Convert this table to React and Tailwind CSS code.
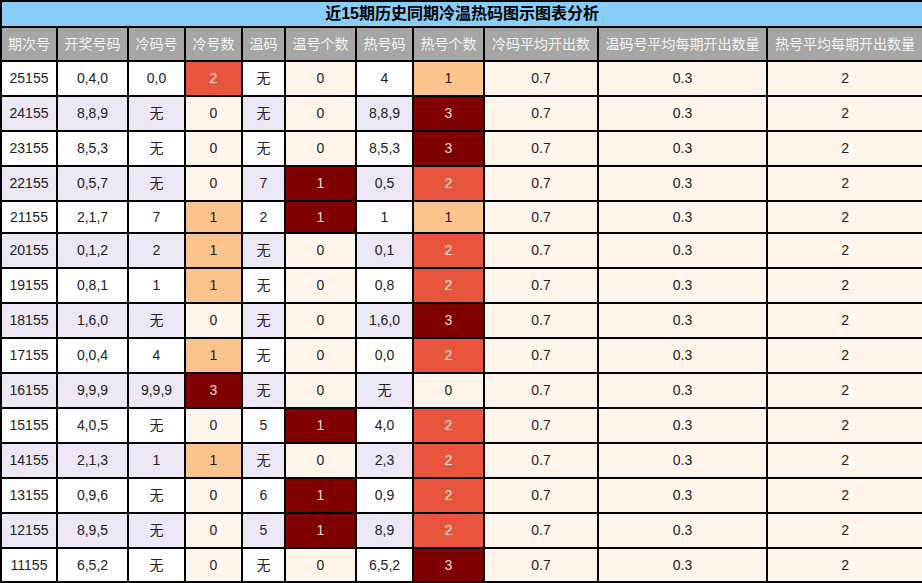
const headers = [
  "期次号",
  "开奖号码",
  "冷码号",
  "冷号数",
  "温码",
  "温号个数",
  "热号码",
  "热号个数",
  "冷码平均开出数",
  "温码号平均每期开出数量",
  "热号平均每期开出数量",
];

const widths = [56, 71, 57, 57, 43, 71, 57, 71, 114, 169, 156];

// 期次号, 开奖号码, 冷码号, 冷号数, 温码, 温号个数, 热号码, 热号个数
const rows = [
  ["25155", "0,4,0", "0,0", 2, "无", 0, "4", 1],
  ["24155", "8,8,9", "无", 0, "无", 0, "8,8,9", 3],
  ["23155", "8,5,3", "无", 0, "无", 0, "8,5,3", 3],
  ["22155", "0,5,7", "无", 0, "7", 1, "0,5", 2],
  ["21155", "2,1,7", "7", 1, "2", 1, "1", 1],
  ["20155", "0,1,2", "2", 1, "无", 0, "0,1", 2],
  ["19155", "0,8,1", "1", 1, "无", 0, "0,8", 2],
  ["18155", "1,6,0", "无", 0, "无", 0, "1,6,0", 3],
  ["17155", "0,0,4", "4", 1, "无", 0, "0,0", 2],
  ["16155", "9,9,9", "9,9,9", 3, "无", 0, "无", 0],
  ["15155", "4,0,5", "无", 0, "5", 1, "4,0", 2],
  ["14155", "2,1,3", "1", 1, "无", 0, "2,3", 2],
  ["13155", "0,9,6", "无", 0, "6", 1, "0,9", 2],
  ["12155", "8,9,5", "无", 0, "5", 1, "8,9", 2],
  ["11155", "6,5,2", "无", 0, "无", 0, "6,5,2", 3],
];

const cream = "bg-[#fff5ea] text-[#222]";
const light = "bg-[#fbc48d] text-[#222]";
const red = "bg-[#e9553c] text-[#fbe9e6]";
const dark = "bg-[#800000] text-[#f1dada]";

// cold / hot counts go 0..3, warm count only 0..1
const scale = { 0: cream, 1: light, 2: red, 3: dark };
const warmScale = { 0: cream, 1: dark };

const cell = "border-2 border-black text-center p-0";

export default function App() {
  return (
    <div className="w-[922px] h-[583px] overflow-hidden bg-white font-['Liberation_Sans','Noto_Sans_CJK_SC',sans-serif] text-[14px] text-[#222]">
      <table className="w-[922px] table-fixed border-collapse">
        <colgroup>
          {widths.map((w, i) => (
            <col key={i} style={{ width: w }} />
          ))}
        </colgroup>
        <thead>
          <tr className="h-[26px]">
            <th colSpan={11} className={`${cell} bg-[#87cefa] text-[16px] font-bold text-black`}>
              近15期历史同期冷温热码图示图表分析
            </th>
          </tr>
          <tr className="h-[34px]">
            {headers.map((h) => (
              <th key={h} className={`${cell} bg-[#a6a6a6] font-normal text-[#f2f2f2] whitespace-nowrap`}>
                {h}
              </th>
            ))}
          </tr>
        </thead>
        <tbody>
          {rows.map((r, i) => {
            const plain = i % 2 === 0 ? "bg-white" : "bg-[#ece6f5]";
            const hasWu = r.includes("无");
            const last = i === rows.length - 1;
            return (
              <tr key={r[0]} className={last ? "h-[34px]" : hasWu ? "h-[35px]" : "h-[32px]"}>
                <td className={`${cell} ${plain}`}>{r[0]}</td>
                <td className={`${cell} ${plain}`}>{r[1]}</td>
                <td className={`${cell} ${plain}`}>{r[2]}</td>
                <td className={`${cell} ${scale[r[3]]}`}>{r[3]}</td>
                <td className={`${cell} ${plain}`}>{r[4]}</td>
                <td className={`${cell} ${warmScale[r[5]]}`}>{r[5]}</td>
                <td className={`${cell} ${plain}`}>{r[6]}</td>
                <td className={`${cell} ${scale[r[7]]}`}>{r[7]}</td>
                <td className={`${cell} ${cream}`}>0.7</td>
                <td className={`${cell} ${cream}`}>0.3</td>
                <td className={`${cell} ${cream}`}>2</td>
              </tr>
            );
          })}
        </tbody>
      </table>
    </div>
  );
}
